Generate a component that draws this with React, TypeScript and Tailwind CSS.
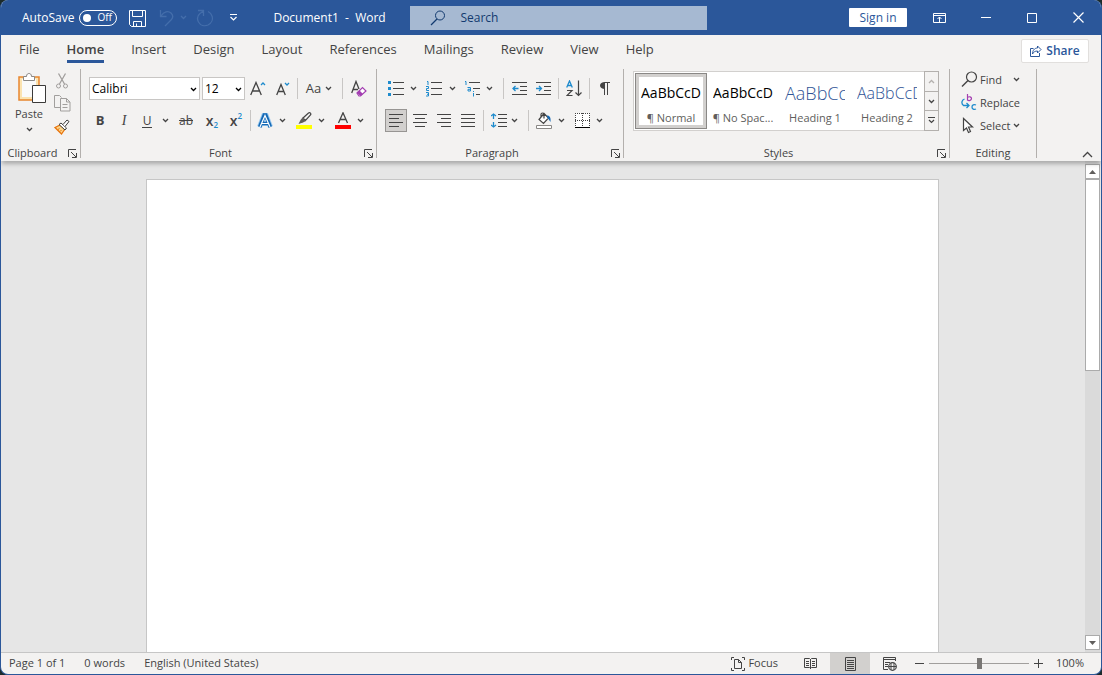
import React, { useState } from "react";

type IconProps = { w: number; h: number; className?: string; children: React.ReactNode };

// Line icon on a pixel grid, one unit per pixel
const Icon = ({ w, h, className = "", children }: IconProps) => (
  <svg
    width={w}
    height={h}
    viewBox={`0 0 ${w} ${h}`}
    fill="none"
    stroke="currentColor"
    aria-hidden="true"
    className={`shrink-0 ${className}`}
  >
    {children}
  </svg>
);

const Chevron = ({ className = "" }: { className?: string }) => (
  <Icon w={7} h={5} className={className}>
    <path d="M1 1l2.5 2.5L6 1" strokeWidth="1.3" />
  </Icon>
);

const Launcher = () => (
  <Icon w={9} h={9}>
    <path d="M.5 8V.5H8M3 3l5 5M8.500 4v4.500H4" />
  </Icon>
);

// Stack of lines given as [x1, x2, y]
const Lines = ({ rows }: { rows: number[][] }) => (
  <>
    {rows.map(([x1, x2, y], i) => (
      <path key={i} d={`M${x1} ${y}.5H${x2}`} />
    ))}
  </>
);

interface ToolProps {
  label: string;
  className?: string;
  children: React.ReactNode;
}

const Tool = ({ label, className = "w-6", children }: ToolProps) => (
  <button
    type="button"
    aria-label={label}
    title={label}
    className={`flex h-[23px] shrink-0 items-center justify-center hover:bg-[#d2d0ce] ${className}`}
  >
    {children}
  </button>
);

const Drop = ({ label, className = "w-[10px]" }: { label: string; className?: string }) => (
  <Tool label={label} className={className}>
    <Chevron />
  </Tool>
);

const Sep = ({ className = "" }: { className?: string }) => (
  <div className={`h-[21px] w-px shrink-0 bg-[#c8c6c4] ${className}`} />
);

interface GroupProps {
  name: string;
  className: string;
  launcher?: boolean;
  children: React.ReactNode;
}

const Group = ({ name, className, launcher = true, children }: GroupProps) => (
  <section aria-label={name} className={`flex shrink-0 ${className}`}>
    <div className="flex min-w-0 flex-1 flex-col">
      <div className="h-[78px]">{children}</div>
      <div className="flex h-[17px] items-center">
        <span className="flex-1 pt-[2px] text-center">{name}</span>
        {launcher && (
          <button type="button" aria-label={`${name} settings`} className="flex w-4 justify-center pt-[2px]">
            <Launcher />
          </button>
        )}
      </div>
    </div>
    <div className="mt-[3px] h-[89px] w-px bg-[#b3b0ad]" />
  </section>
);

const TitleBar = () => {
  const [autoSave, setAutoSave] = useState(false);

  return (
    <header className="flex h-[35px] shrink-0 items-center bg-[#2b579a] text-xs text-white">
      <label className="ml-[21px] flex items-center gap-[5px]">
        AutoSave
        <input
          type="checkbox"
          className="sr-only"
          checked={autoSave}
          onChange={(e) => setAutoSave(e.target.checked)}
        />
        <span className="flex h-4 w-[38px] items-center gap-[6px] rounded-full border border-white pl-[3px] text-[10px]">
          <span className="size-2 rounded-full bg-white" />
          {autoSave ? "On" : "Off"}
        </span>
      </label>
      <button type="button" aria-label="Save" className="ml-3 pt-[2px]">
        <Icon w={17} h={17}>
          <path d="M.5.500h16v16h-14l-2-2zM3.500.500v6h10v-6M4.500 16.500v-5h8v5M7.500 13.500v3" />
        </Icon>
      </button>
      <div className="ml-[13px] flex items-center gap-[5px] text-[#446eab]">
        <button type="button" aria-label="Undo" disabled>
          <Icon w={16} h={18}>
            <path d="M1.500 1v6.500h6M2 7c3-4.500 7-5.500 10-3 2.500 2.500 2 5 0 7l-6 6" strokeWidth="1.3" />
          </Icon>
        </button>
        <button type="button" aria-label="Undo history" disabled>
          <Chevron />
        </button>
        <button type="button" aria-label="Repeat" className="ml-1" disabled>
          <Icon w={18} h={18}>
            <path d="M2 1.500h5.500V7M7.500 2L4 4.500C1.500 6.500 1 10 2.500 13c2 3.500 6 4.500 9.500 3 4-2 5-6 4-9-.5-2-2-3.500-4-4.500" strokeWidth="1.3" />
          </Icon>
        </button>
      </div>
      <button type="button" aria-label="Customize Quick Access Toolbar" className="ml-[15px]">
        <Icon w={9} h={7}>
          <path d="M1 .5h7M1.500 3l3 3 3-3" strokeWidth="1.2" />
        </Icon>
      </button>
      <h1 className="ml-[35px] w-[137px] whitespace-pre">Document1  -  Word</h1>
      <label className="flex h-6 w-[297px] items-center bg-[#a6b9d2] text-[#123a6f]">
        <Icon w={16} h={16} className="ml-5">
          <circle cx="10" cy="5.500" r="4.500" />
          <path d="M7 9L1 15" strokeWidth="1.2" />
        </Icon>
        <input
          type="text"
          aria-label="Search"
          placeholder="Search"
          className="ml-[14px] min-w-0 flex-1 bg-transparent outline-none placeholder:text-[#123a6f] placeholder:opacity-100"
        />
      </label>
      <button type="button" className="ml-auto h-[19px] w-[58px] rounded-[1px] bg-white text-[#2b579a]">
        Sign in
      </button>
      <div className="ml-[9px] flex h-full">
        <button type="button" aria-label="Ribbon Display Options" className="flex w-[47px] items-center justify-center">
          <Icon w={13} h={10}>
            <path d="M.5.500h12v9H.5zM.5 2.500h12M6.500 9V4M4.500 6l2-2 2 2" />
          </Icon>
        </button>
        <button type="button" aria-label="Minimize" className="flex w-[46px] items-center justify-center">
          <Icon w={10} h={1}>
            <path d="M0 .5h10" />
          </Icon>
        </button>
        <button type="button" aria-label="Maximize" className="flex w-[46px] items-center justify-center">
          <Icon w={10} h={10}>
            <path d="M.5.500h9v9H.5z" />
          </Icon>
        </button>
        <button type="button" aria-label="Close" className="flex w-[46px] items-center justify-center">
          <Icon w={11} h={11}>
            <path d="M.5.500l10 10M10.500.500l-10 10" strokeWidth="1.2" />
          </Icon>
        </button>
      </div>
    </header>
  );
};

const tabs = ["File", "Home", "Insert", "Design", "Layout", "References", "Mailings", "Review", "View", "Help"];

const TabBar = () => {
  const [active, setActive] = useState("Home");

  return (
    <nav className="flex h-[31px] shrink-0 items-center pl-[18px] pr-3 text-[13px]">
      <div className="flex flex-1 gap-[27px]">
        {tabs.map((tab) => (
          <button
            key={tab}
            type="button"
            onClick={() => setActive(tab)}
            className={`h-[25px] border-b-[3px] leading-5 ${
              tab === active ? "border-[#2b579a] font-semibold" : "border-transparent"
            }`}
          >
            {tab}
          </button>
        ))}
      </div>
      <button
        type="button"
        className="flex h-6 w-[68px] items-center justify-center gap-1 rounded-[2px] border border-[#e1dfdd] bg-white text-xs font-semibold text-[#2b579a]"
      >
        <Icon w={12} h={12}>
          <path d="M3.500 3.500h-3v8h9V8M7.500 1l3.500 3.500L7.500 8V6C5 6 3.500 7 2.500 9c0-3.500 2-6 5-6z" />
        </Icon>
        Share
      </button>
    </nav>
  );
};

const Clipboard = () => (
  <Group name="Clipboard" className="w-20">
    <div className="flex gap-1 pl-[11px]">
      <button type="button" className="flex w-[34px] flex-col items-center pt-[6px]">
        <Icon w={28} h={32} className="ml-[5px]">
          <path d="M1 5h20v23H1z" fill="#fbe3b0" stroke="#e8862e" strokeWidth="1.500" />
          <path d="M4 7h14v18H4z" fill="#fafafa" stroke="none" />
          <path d="M5.500 8.500v-4h3C8.500 2 10 1.500 11 1.500s2.500.500 2.500 3h3v4z" fill="#fff" stroke="#8a8886" />
          <path d="M14.500 13.500h13v17h-13z" fill="#fff" stroke="#3b3a39" />
        </Icon>
        <span className="mt-[2px] leading-4">Paste</span>
        <Chevron className="mt-[5px]" />
      </button>
      <div className="flex flex-col pt-[3px] text-[#a19f9d]">
        <Tool label="Cut">
          <Icon w={12} h={16}>
            <path d="M2.500.500l6 10.500M9.500.500L3.500 11" strokeWidth="1.3" />
            <circle cx="2.500" cy="13" r="2" />
            <circle cx="9.500" cy="13" r="2" />
          </Icon>
        </Tool>
        <Tool label="Copy">
          <Icon w={17} h={17}>
            <path d="M6 12.500H.5v-12h5l2 2M6.500 3.500h6l3.500 3.500v9H6.500zM12.500 3.500V7H16M8.500 9.500h5M8.500 12.500h5" />
          </Icon>
        </Tool>
        <Tool label="Format Painter">
          <Icon w={16} h={16}>
            <path d="M1 8.500l5-2.500 5 4-3.500 5z" fill="#fbd48b" stroke="#e8740c" strokeWidth="1.300" />
            <path d="M4 10.500l1.500-1M6 12.500L7.500 11" stroke="#e8740c" />
            <path d="M5 5.500L7 4l5.500 5-1.500 2z" fill="#fff" stroke="#3b3a39" />
            <path d="M9 5.500l4-4.500 2 1.500-4 5" fill="#fff" stroke="#3b3a39" />
          </Icon>
        </Tool>
      </div>
    </div>
  </Group>
);

interface ComboProps {
  label: string;
  options: string[];
  className: string;
}

const Combo = ({ label, options, className }: ComboProps) => (
  <div className={`relative h-[23px] shrink-0 text-xs text-black ${className}`}>
    <select aria-label={label} className="size-full appearance-none border border-[#c8c6c4] bg-white pl-[2px]">
      {options.map((o) => (
        <option key={o}>{o}</option>
      ))}
    </select>
    <Chevron className="pointer-events-none absolute right-[3px] top-[10px]" />
  </div>
);

const FontGroup = () => (
  <Group name="Font" className="w-[296px]">
    <div className="flex flex-col gap-[9px] pl-[7px] pt-[11px]">
      <div className="flex items-center pl-px">
        <Combo label="Font" options={["Calibri", "Arial", "Cambria"]} className="w-[111px]" />
        <Combo label="Font Size" options={["12", "14", "16"]} className="ml-[2px] w-[43px]" />
        <Tool label="Increase Font Size" className="ml-px w-6">
          <Icon w={16} h={16}>
            <path d="M.7 14L6 1.500 11.300 14M2.500 10h7" strokeWidth="1.3" />
            <path d="M11 4l2-2 2 2" stroke="#1e8bcd" strokeWidth="1.3" />
          </Icon>
        </Tool>
        <Tool label="Decrease Font Size">
          <Icon w={15} h={16}>
            <path d="M1.700 14L6 3.500 10.300 14M3 10.500h6" strokeWidth="1.3" />
            <path d="M10 2l2 2 2-2" stroke="#1e8bcd" strokeWidth="1.3" />
          </Icon>
        </Tool>
        <Sep className="ml-[3px]" />
        <Tool label="Change Case" className="ml-[7px] w-7 gap-[4px] text-[13px]">
          Aa
          <Chevron />
        </Tool>
        <Sep className="ml-[9px]" />
        <Tool label="Clear Formatting" className="ml-[3px] w-6">
          <Icon w={17} h={17}>
            <path d="M1.700 13L6 1.500 9 9M3 9.500h5" strokeWidth="1.3" />
            <path d="M7 13l5.500-5.500L16 11l-5.500 5h-1.500z" fill="#fff" stroke="#a33eb1" strokeWidth="1.2" />
            <path d="M7 13l2.500-2.500 3.500 3.500-2.500 2z" fill="#a33eb1" stroke="none" />
          </Icon>
        </Tool>
      </div>
      <div className="flex items-center">
        <Tool label="Bold">
          <span className="text-[13px] font-bold">B</span>
        </Tool>
        <Tool label="Italic">
          <span className="font-[Liberation_Serif,serif] text-sm italic">I</span>
        </Tool>
        <Tool label="Underline" className="w-[22px]">
          <span className="border-b border-current px-px text-xs leading-[13px]">U</span>
        </Tool>
        <Drop label="Underline style" className="w-[14px]" />
        <Tool label="Strikethrough" className="w-7">
          <span className="px-px text-xs line-through">ab</span>
        </Tool>
        <Tool label="Subscript">
          <span className="text-sm font-semibold leading-4">x</span>
          <span className="pt-[9px] text-[8px] font-semibold leading-3 text-[#1e8bcd]">2</span>
        </Tool>
        <Tool label="Superscript">
          <span className="text-sm font-semibold leading-4">x</span>
          <span className="pb-[9px] text-[8px] font-semibold leading-3 text-[#1e8bcd]">2</span>
        </Tool>
        <Sep className="ml-[2px]" />
        <Tool label="Text Effects" className="ml-[2px] w-6">
          <Icon w={16} h={16}>
            <path d="M2.500 14L7 2h2l4.500 12M4.500 10.500h7" stroke="#9ccbf0" strokeWidth="5" />
            <path d="M2.700 14L7.300 2h1.400l4.600 12M4.500 10.500h7" stroke="#1569b5" strokeWidth="3.600" />
            <path d="M3 14L8 2.500 13 14M5 10.500h6" stroke="#fff" strokeWidth="1.200" />
          </Icon>
        </Tool>
        <Drop label="Text Effects options" />
        <Tool label="Text Highlight Color" className="ml-[5px] w-6">
          <Icon w={16} h={17}>
            <path d="M7 6l5.500-5c1.500-1 3 .5 2 2l-5 5.500z" strokeWidth="1.2" />
            <path d="M6.500 5.500l3.500 3.500-3 1.500-4.500 1.500 2-4z" fill="#605e5c" stroke="none" />
            <path d="M0 13h16v4H0z" fill="#ff0" stroke="none" />
          </Icon>
        </Tool>
        <Drop label="Highlight colors" />
        <Tool label="Font Color" className="ml-[5px] w-6">
          <Icon w={16} h={17}>
            <path d="M3.500 11L8 .8 12.500 11M5 7.500h6" strokeWidth="1.300" />
            <path d="M0 13h16v4H0z" fill="#f00" stroke="none" />
          </Icon>
        </Tool>
        <Drop label="Font colors" />
      </div>
    </div>
  </Group>
);

const alignments = [
  { name: "Align Left", rows: [[0, 14, 1], [0, 10, 5], [0, 14, 9], [0, 10, 13]] },
  { name: "Center", rows: [[0, 14, 1], [2, 12, 5], [0, 14, 9], [2, 12, 13]] },
  { name: "Align Right", rows: [[0, 14, 1], [4, 14, 5], [0, 14, 9], [4, 14, 13]] },
  { name: "Justify", rows: [[0, 14, 1], [0, 14, 5], [0, 14, 9], [0, 14, 13]] },
];

const ParagraphGroup = () => {
  const [align, setAlign] = useState("Align Left");

  return (
    <Group name="Paragraph" className="w-[247px]">
      <div className="flex flex-col gap-[9px] pl-[8px] pt-[11px]">
        <div className="flex items-center">
          <Tool label="Bullets" className="w-[21px]">
            <Icon w={16} h={15}>
              <path d="M0 0h3v3H0zM0 6h3v3H0zM0 12h3v3H0z" fill="#1e8bcd" stroke="none" />
              <Lines rows={[[5, 16, 1], [5, 16, 7], [5, 16, 13]]} />
            </Icon>
          </Tool>
          <Drop label="Bullet library" className="w-[14px]" />
          <Tool label="Numbering" className="ml-[3px] w-[22px]">
            <Icon w={16} h={17}>
              <path
                d="M1 1.500h1V5M0 6.500h2.500v2H.5v2H3M0 12.500h2.500V16H0M1 14.300h1.500"
                stroke="#1e8bcd"
              />
              <Lines rows={[[5, 16, 2], [5, 16, 8], [5, 16, 14]]} />
            </Icon>
          </Tool>
          <Drop label="Numbering library" className="w-[14px]" />
          <Tool label="Multilevel List" className="ml-[3px] w-5">
            <Icon w={16} h={17}>
              <path d="M1 1.500h1V5M3.500 7.500h3V11H4V9.300h2M9.500 13v3.500M9.500 11v1" stroke="#1e8bcd" />
              <Lines rows={[[5, 16, 2], [9, 16, 8], [12, 16, 14]]} />
            </Icon>
          </Tool>
          <Drop label="List library" className="ml-px w-3" />
          <Sep className="ml-2" />
          <Tool label="Decrease Indent" className="ml-[3px] w-6">
            <Icon w={15} h={14}>
              <Lines rows={[[0, 15, 0], [8, 15, 4], [8, 15, 8], [0, 15, 12]]} />
              <path d="M6.500 6.500H1M3.500 4L1 6.500 3.500 9" stroke="#1e8bcd" strokeWidth="1.300" />
            </Icon>
          </Tool>
          <Tool label="Increase Indent">
            <Icon w={15} h={14}>
              <Lines rows={[[0, 15, 0], [8, 15, 4], [8, 15, 8], [0, 15, 12]]} />
              <path d="M0 6.500h5.500M3 4l2.500 2.500L3 9" stroke="#1e8bcd" strokeWidth="1.300" />
            </Icon>
          </Tool>
          <Sep className="ml-[3px]" />
          <Tool label="Sort" className="ml-[3px] w-6">
            <Icon w={16} h={17}>
              <path d="M.7 7.500L3.500 1l2.800 6.500M1.500 5.500h4" stroke="#1e8bcd" strokeWidth="1.300" />
              <path d="M1 10.500h5l-5 5h5.500M12.500.500v15M9.500 12.500l3 3 3-3" strokeWidth="1.200" />
            </Icon>
          </Tool>
          <Sep className="ml-[3px]" />
          <Tool label="Show paragraph marks" className="ml-[3px] w-6">
            <Icon w={10} h={13}>
              <path d="M4.500 13V.5H10M7.500.5V13" />
              <path d="M5 0C2 0 0 1.500 0 3.500S2 7 5 7z" fill="currentColor" stroke="none" />
            </Icon>
          </Tool>
        </div>
        <div className="flex items-center">
          <div className="flex gap-[2px]">
            {alignments.map(({ name, rows }) => (
              <button
                key={name}
                type="button"
                aria-label={name}
                aria-pressed={align === name}
                onClick={() => setAlign(name)}
                className={`flex h-[23px] w-[22px] items-center justify-center border ${
                  align === name ? "border-[#979593] bg-[#d2d0ce]" : "border-transparent"
                }`}
              >
                <Icon w={14} h={15}>
                  <Lines rows={rows} />
                </Icon>
              </button>
            ))}
          </div>
          <Sep className="ml-[4px]" />
          <Tool label="Line Spacing" className="ml-[5px] w-5">
            <Icon w={16} h={15}>
              <path d="M2.500 1v5M2.500 9v5M0 3l2.500-2L5 3M0 12l2.500 2L5 12" stroke="#1e8bcd" strokeWidth="1.300" />
              <Lines rows={[[7, 16, 1], [7, 16, 5], [7, 16, 9], [7, 16, 13]]} />
            </Icon>
          </Tool>
          <Drop label="Spacing options" />
          <Sep className="ml-[9px]" />
          <Tool label="Shading" className="ml-[3px] w-6">
            <Icon w={16} h={17}>
              <path d="M8 1.500L3 7.500l4.500 4 5-5.500zM5 5V2.500C5 .5 8 .5 8 2.500v4" fill="#fff" strokeWidth="1.200" />
              <path d="M11 3.500c3 0 4 2.500 3.500 6.500-1-1-1.500-3-3-4z" fill="#1569b5" stroke="none" />
              <path d="M.5 13.500h15v3H.5z" fill="#fff" stroke="#8a8886" />
            </Icon>
          </Tool>
          <Drop label="Shading colors" />
          <Tool label="Borders" className="ml-[4px] w-6">
            <Icon w={15} h={16}>
              <path d="M0 0h15v15H0z" fill="#fff" stroke="none" />
              <path d="M0 .5h15M.5 0v14M14.500 0v14M7.500 0v14M0 7.500h15" strokeDasharray="1 1" />
              <path d="M0 14.500h15" stroke="#000" />
            </Icon>
          </Tool>
          <Drop label="Border styles" />
        </div>
      </div>
    </Group>
  );
};

const styleItems = [
  { name: "¶ Normal", sample: "AaBbCcD", look: "text-sm text-black" },
  { name: "¶ No Spac...", sample: "AaBbCcD", look: "text-sm text-black" },
  { name: "Heading 1", sample: "AaBbCc", look: "text-lg font-light text-[#2f5496]" },
  { name: "Heading 2", sample: "AaBbCcD", look: "text-base font-light text-[#2f5496]" },
];

const StylesGroup = () => {
  const [selected, setSelected] = useState("¶ Normal");

  return (
    <Group name="Styles" className="w-[326px]">
      <div className="pl-[9px] pt-[5px]">
        <div className="flex h-[60px] w-[306px] border border-[#d2d0ce] bg-white">
          {styleItems.map(({ name, sample, look }) => (
            <button
              key={name}
              type="button"
              aria-pressed={selected === name}
              onClick={() => setSelected(name)}
              className={`m-px flex w-[72px] shrink-0 flex-col items-center -mr-px border pt-[9px] ${
                selected === name
                  ? "border-[#8a8886] shadow-[inset_0_0_0_3px_#d2d0ce]"
                  : "border-transparent"
              }`}
            >
              <span className={`flex h-5 w-[60px] items-center overflow-hidden whitespace-nowrap ${look}`}>
                {sample}
              </span>
              <span className="mt-[5px] whitespace-nowrap leading-5 text-[#605e5c]">{name}</span>
            </button>
          ))}
          <div className="-my-px -mr-px ml-auto flex w-[15px] flex-col divide-y divide-[#b3b0ad] border border-[#b3b0ad] bg-[#f3f2f1]">
            <button type="button" aria-label="Row up" className="flex flex-1 items-center justify-center text-[#b3b0ad]" disabled>
              <Chevron className="rotate-180" />
            </button>
            <button type="button" aria-label="Row down" className="flex flex-1 items-center justify-center">
              <Chevron />
            </button>
            <button type="button" aria-label="More styles" className="flex flex-1 items-center justify-center">
              <Icon w={7} h={7}>
                <path d="M0 .5h7M1 3l2.500 2.500L6 3" strokeWidth="1.200" />
              </Icon>
            </button>
          </div>
        </div>
      </div>
    </Group>
  );
};

const EditingGroup = () => (
  <Group name="Editing" className="w-[87px]" launcher={false}>
    <div className="flex flex-col pl-[11px] pt-[2px]">
      <button type="button" className="flex h-[23px] items-center">
        <Icon w={17} h={17}>
          <circle cx="10.500" cy="6" r="5" strokeWidth="1.200" />
          <path d="M7 9.500L1 15.500" strokeWidth="1.400" />
        </Icon>
        <span className="ml-[2px] pt-[2px]">Find</span>
        <Chevron className="ml-[11px]" />
      </button>
      <button type="button" className="flex h-[23px] items-center">
        <Icon w={17} h={17}>
          <path d="M6.500 0v6.500M6.500 3.500C8 2 10.500 3 10.500 4.500S8 7.500 6.500 6" stroke="#a33eb1" strokeWidth="1.200" />
          <path d="M15 11c-2-1-4 0-4 2s2 3 4 2M3.500 5C.5 6 0 9.500 2.500 11.500H8M5.500 9L8 11.500 5.500 14" stroke="#1e8bcd" strokeWidth="1.300" />
        </Icon>
        <span className="ml-[2px] pt-[2px]">Replace</span>
      </button>
      <button type="button" className="flex h-[23px] items-center">
        <Icon w={17} h={17}>
          <path d="M2.500 1.500v12l3-2.500 2 4.500 2-1-2-4.500h4z" fill="#fff" strokeWidth="1.200" />
        </Icon>
        <span className="ml-[2px] pt-[2px]">Select</span>
        <Chevron className="ml-[3px]" />
      </button>
    </div>
  </Group>
);

const Ribbon = () => (
  <div className="relative z-10 flex h-[95px] shrink-0 bg-[#f3f2f1] shadow-[0_4px_4px_-1px_#00000040]">
    <Clipboard />
    <FontGroup />
    <ParagraphGroup />
    <StylesGroup />
    <EditingGroup />
    <button type="button" aria-label="Collapse the Ribbon" className="mb-[3px] ml-auto mr-2 self-end">
      <Icon w={11} h={7}>
        <path d="M1 6l4.500-4.500L10 6" strokeWidth="1.300" />
      </Icon>
    </button>
  </div>
);

const Workspace = () => (
  <main className="flex min-h-0 flex-1 bg-[#e6e6e6]">
    <div className="flex min-w-0 flex-1 justify-center overflow-hidden pr-[2px] pt-[18px]">
      <textarea
        aria-label="Document"
        className="w-[793px] resize-none border border-b-0 border-[#c6c6c6] bg-white p-24 text-black outline-none"
      />
    </div>
    <div className="mr-px flex w-[15px] flex-col bg-[#dadada] pb-[2px] pt-[3px]">
      <button type="button" aria-label="Scroll up" className="flex h-[15px] items-center justify-center border border-[#ababab] bg-white">
        <Icon w={7} h={4}>
          <path d="M0 4l3.500-4L7 4z" fill="#605e5c" stroke="none" />
        </Icon>
      </button>
      <div className="flex-1">
        <div className="h-[42%] border border-[#ababab] bg-white" />
      </div>
      <button type="button" aria-label="Scroll down" className="flex h-[15px] items-center justify-center border border-[#ababab] bg-white">
        <Icon w={7} h={4}>
          <path d="M0 0l3.500 4L7 0z" fill="#605e5c" stroke="none" />
        </Icon>
      </button>
    </div>
  </main>
);

const StatusBar = () => {
  const [zoom, setZoom] = useState(100);

  return (
    <footer className="flex h-[22px] shrink-0 items-center border-t border-[#c6c6c6] pl-2 pr-[17px] text-[11px]">
      <div className="flex gap-[19px]">
        <button type="button">Page 1 of 1</button>
        <button type="button">0 words</button>
        <button type="button">English (United States)</button>
      </div>
      <button type="button" className="ml-auto flex items-center gap-[3px]">
        <Icon w={14} h={14}>
          <path d="M3 .5H.5V3M11 .5h2.500V3M.5 11v2.500H3M13.500 11v2.500H11M3.500 2.500h4l3 3v6h-7zM7.500 2.500v3h3" />
        </Icon>
        Focus
      </button>
      <div className="ml-[12px] flex h-full">
        <button type="button" aria-label="Read Mode" className="flex w-10 items-center justify-center">
          <Icon w={13} h={13}>
            <path d="M.5 1.500h5l1 1 1-1h5v9h-5l-1 1-1-1h-5zM6.500 2v10M2 4.500h3M2 6.500h3M2 8.500h3M8 4.500h3M8 6.500h3M8 8.500h3" />
          </Icon>
        </button>
        <button type="button" aria-label="Print Layout" className="flex w-10 items-center justify-center bg-[#d2d0ce]">
          <Icon w={11} h={14}>
            <path d="M.5.500h10v13H.5zM2 3.500h7M2 5.500h7M2 7.500h7M2 9.500h7M2 11.500h7" />
          </Icon>
        </button>
        <button type="button" aria-label="Web Layout" className="flex w-10 items-center justify-center">
          <Icon w={14} h={14}>
            <path d="M5 12.500H.5V.5h12V4M.5 2.500h12M2 5.500h5M2 7.500h3M2 9.500h3" />
            <circle cx="9.500" cy="9.500" r="3.800" strokeWidth="1.200" />
            <path d="M6 9.500h7M8 6v7M11 6v7" />
          </Icon>
        </button>
      </div>
      <button type="button" aria-label="Zoom Out" onClick={() => setZoom(Math.max(0, zoom - 10))} className="ml-[5px]">
        <Icon w={9} h={9}>
          <path d="M0 4.500h9" />
        </Icon>
      </button>
      <input
        type="range"
        aria-label="Zoom"
        min={0}
        max={200}
        value={zoom}
        onChange={(e) => setZoom(Number(e.target.value))}
        className="mx-[5px] h-px w-[100px] appearance-none bg-[#a19f9d] [&::-webkit-slider-thumb]:h-[11px] [&::-webkit-slider-thumb]:w-[5px] [&::-webkit-slider-thumb]:appearance-none [&::-webkit-slider-thumb]:bg-[#797775]"
      />
      <button type="button" aria-label="Zoom In" onClick={() => setZoom(Math.min(200, zoom + 10))}>
        <Icon w={9} h={9}>
          <path d="M0 4.500h9M4.500 0v9" />
        </Icon>
      </button>
      <span className="ml-[13px] w-7">{zoom}%</span>
    </footer>
  );
};

export default function App() {
  return (
    <div className="h-screen bg-[#1c2b2b]">
      <div className="flex h-full flex-col overflow-hidden rounded-lg border border-t-0 border-[#2b579a] bg-[#f3f2f1] font-[Open_Sans,Noto_Sans,sans-serif] text-[11px] text-[#444]">
        <TitleBar />
        <TabBar />
        <Ribbon />
        <Workspace />
        <StatusBar />
      </div>
    </div>
  );
}
